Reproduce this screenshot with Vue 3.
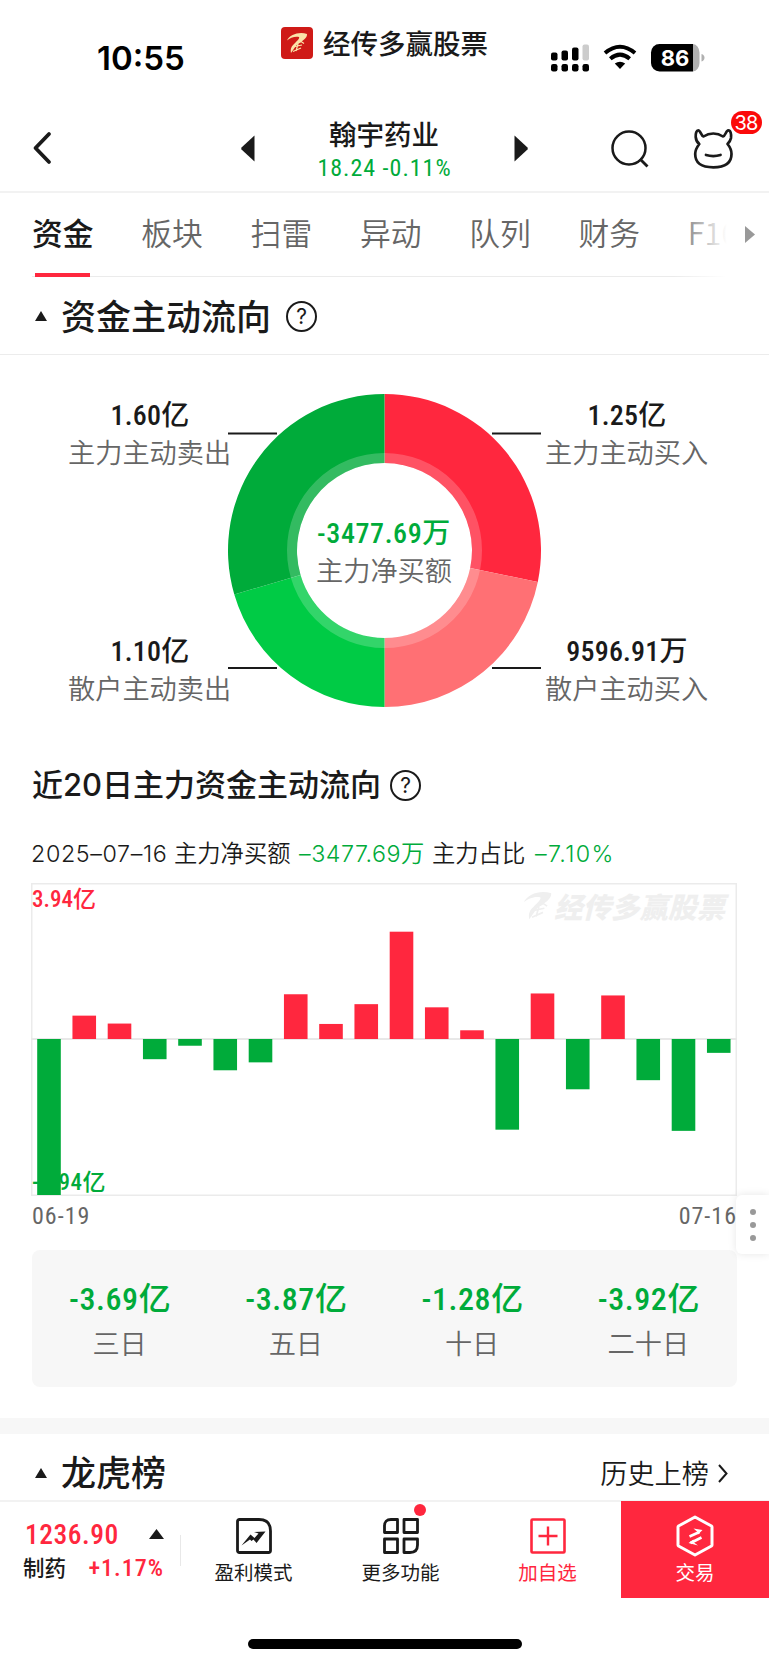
<template>
  <div class="page">
    <header class="status-bar">
      <span class="clock">10:55</span>
      <div class="brand">
        <svg class="brand-logo" viewBox="0 0 32 32">
          <rect width="32" height="32" rx="4" fill="#cf1a17" />
          <path :d="swoosh" fill="#fbe3a9" />
          <path :d="swooshInner" fill="none" stroke="#fbe3a9" stroke-width="1.2" />
        </svg>
        <span>经传多赢股票</span>
      </div>
      <svg class="status-icons" width="154" height="28" viewBox="0 0 154 28">
        <g>
          <rect x="0" y="8.5" width="6.5" height="8" rx="2" />
          <rect x="10.5" y="6.5" width="6.5" height="10" rx="2" />
          <rect x="21" y="3.5" width="6.5" height="13" rx="2" />
          <rect x="31.5" y="0.5" width="6.5" height="16" rx="2" fill="#ccc" />
          <rect v-for="x in [0, 10.5, 21, 31.5]" :key="x" :x="x" y="20" width="6.5" height="7.5" rx="2.2" />
        </g>
        <g fill="none" stroke="#000" stroke-width="4">
          <path d="M54 9 Q69 -3.5 84 9" />
          <path d="M59.3 14.7 Q69 6.5 78.7 14.7" />
        </g>
        <path d="M63.8 19.6 Q69 15.8 74.2 19.6 L69 25Z" />
        <path d="M108.5 0 H142 V27.5 H108.5 A8.5 8.5 0 0 1 100 19 V8.5 A8.5 8.5 0 0 1 108.5 0Z" />
        <path d="M142 0 A7 8.5 0 0 1 148.5 8.5 V19 A7 8.5 0 0 1 142 27.5Z" fill="#b0b0b0" />
        <path d="M150.5 10 Q153.5 11 153.5 13.7 T150.5 17.5Z" fill="#b0b0b0" />
        <text x="124" y="21.5" text-anchor="middle" class="battery-text">86</text>
      </svg>
    </header>

    <nav class="nav-bar">
      <svg class="back" width="20" height="34" viewBox="0 0 20 34">
        <path d="M17 3 L3.5 17 L17 31" fill="none" stroke="#1a1a1a" stroke-width="3.8" stroke-linecap="round" stroke-linejoin="round" />
      </svg>
      <svg class="prev" width="14" height="27" viewBox="0 0 14 27">
        <path d="M13.5 0.5 V26.5 L0.5 14.5 Q0 13.5 0.5 12.5Z" fill="#1a1a1a" />
      </svg>
      <div class="stock">
        <div class="stock-name">翰宇药业</div>
        <div class="stock-price num down">18.24 -0.11%</div>
      </div>
      <svg class="next" width="14" height="27" viewBox="0 0 14 27">
        <path d="M0.5 0.5 V26.5 L13.5 14.5 Q14 13.5 13.5 12.5Z" fill="#1a1a1a" />
      </svg>
      <svg class="search" width="38" height="38" viewBox="0 0 38 38">
        <g fill="none" stroke="#1a1a1a" stroke-width="2.5">
          <circle cx="18" cy="18" r="16.5" />
          <path d="M29 29 L36.5 36.5" stroke-width="2.8" />
        </g>
      </svg>
      <div class="mascot">
        <svg width="41" height="41" viewBox="0 0 41 41">
          <g fill="none" stroke="#1a1a1a" stroke-width="2.7" stroke-linejoin="round" stroke-linecap="round">
            <path d="M10.5 8.5 Q15 5.5 20.3 5.5 T30 8.5 C32.5 8 33 2.3 35.3 2.3 C37.5 2.3 38.5 6 38 10 C37.5 13 36 14.5 34.5 16 C37 19 38.5 22 38.5 26 C38.5 35 33 39.3 20.3 39.3 C8 39.3 2.2 35 2.2 26 C2.2 22 4 19 6.3 16 C4 14.5 3 12 2.7 9 C2.5 5 3.5 2.3 5.3 2.3 C7.5 2.3 8 8 10.5 8.5Z" />
            <path d="M13 27 Q20.3 29.2 27.5 27" stroke-width="2.8" />
          </g>
        </svg>
        <span class="badge">38</span>
      </div>
    </nav>

    <div class="tabs">
      <div v-for="(tab, i) in tabs" :key="tab" class="tab" :class="{ active: i === 0 }">{{ tab }}</div>
      <div class="tabs-fade">
        <svg width="10" height="17" viewBox="0 0 10 17"><path d="M0 0 L10 8.5 L0 17Z" fill="#999" /></svg>
      </div>
    </div>

    <section class="section-head">
      <svg class="caret" width="12" height="10" viewBox="0 0 12 10"><path d="M6 0 L12 10 H0Z" /></svg>
      <h2>资金主动流向</h2>
      <span class="help">?</span>
    </section>

    <section class="flow">
      <div class="flow-col">
        <div v-for="item in sells" :key="item.label" class="flow-item">
          <div class="flow-value num">{{ item.value }}</div>
          <div class="flow-label">{{ item.label }}</div>
        </div>
      </div>
      <div class="donut">
        <svg width="313" height="313" viewBox="0 0 313 313">
          <path v-for="s in slices" :key="s.color" :d="s.d" :fill="s.color" />
          <circle cx="156.5" cy="156.5" r="92.5" fill="none" stroke="#fff" stroke-opacity="0.2" stroke-width="10" />
          <path d="M0 39.5 H49 M264 39.5 H313 M0 273.9 H49 M264 273.9 H313" stroke="#1a1a1a" stroke-width="2" />
        </svg>
        <div class="donut-text">
          <div class="donut-value num down">-3477.69万</div>
          <div class="flow-label">主力净买额</div>
        </div>
      </div>
      <div class="flow-col right">
        <div v-for="item in buys" :key="item.label" class="flow-item">
          <div class="flow-value num">{{ item.value }}</div>
          <div class="flow-label">{{ item.label }}</div>
        </div>
      </div>
    </section>

    <section class="history">
      <div class="history-head">
        <h3>近20日主力资金主动流向</h3>
        <span class="help">?</span>
      </div>
      <div class="history-info">
        <span class="info-date">2025–07–16</span>
        <span class="info-net">主力净买额</span>
        <span class="info-amount down">–3477.69万</span>
        <span class="info-ratio">主力占比</span>
        <span class="info-pct down">–7.10%</span>
      </div>
      <div class="chart">
        <span class="axis top num">3.94亿</span>
        <span class="axis bottom num">-3.94亿</span>
        <div class="watermark">
          <svg width="33" height="33" viewBox="4 4 24 24">
            <path :d="swoosh" fill="#efefef" />
            <path :d="swooshInner" fill="none" stroke="#efefef" stroke-width="1.2" />
          </svg>
          <span>经传多赢股票</span>
        </div>
        <svg class="bars" width="706" height="313" viewBox="0 0 706 313">
          <path d="M0 156 H706" stroke="#e8e8e8" stroke-width="2" />
          <rect
            v-for="(bar, i) in bars"
            :key="i"
            :x="bar.x"
            :y="bar.y"
            width="23.6"
            :height="bar.h"
            :fill="bar.color"
          />
        </svg>
      </div>
      <div class="dates num">
        <span>06-19</span>
        <span>07-16</span>
      </div>
      <div class="summary">
        <div v-for="item in summary" :key="item.label" class="summary-item">
          <div class="summary-value num down">{{ item.value }}</div>
          <div class="summary-label">{{ item.label }}</div>
        </div>
      </div>
    </section>

    <section class="section-head rank">
      <svg class="caret" width="12" height="10" viewBox="0 0 12 10"><path d="M6 0 L12 10 H0Z" /></svg>
      <h2>龙虎榜</h2>
      <span class="more">历史上榜</span>
      <svg class="more-arrow" width="10" height="19" viewBox="0 0 10 19">
        <path d="M1 1 L8.5 9.5 L1 18" fill="none" stroke="#1a1a1a" stroke-width="2" />
      </svg>
    </section>

    <footer class="bottom-bar">
      <div class="sector">
        <div class="sector-row">
          <span class="sector-index num">1236.90</span>
          <svg width="15" height="10" viewBox="0 0 15 10"><path d="M7.5 0 L15 10 H0Z" fill="#1a1a1a" /></svg>
        </div>
        <div class="sector-row second">
          <span class="sector-name">制药</span>
          <span class="sector-pct num">+1.17%</span>
        </div>
      </div>
      <div class="action">
        <svg width="36" height="36" viewBox="0 0 36 36">
          <path d="M3.5 1.5 H23 Q34.5 1.5 34.5 13 V32.5 Q34.5 34.5 32.5 34.5 H3.5 Q1.5 34.5 1.5 32.5 V3.5 Q1.5 1.5 3.5 1.5Z" fill="none" stroke="#1a1a1a" stroke-width="2.8" />
          <path d="M5.5 27.5 L14.5 16.5 L18.5 20 L22.5 15.5 L18 14 L29.5 13.5 L20.5 25 L17.5 21.5 L15.5 23 L14 21.5Z" fill="#1a1a1a" />
        </svg>
        <span>盈利模式</span>
      </div>
      <div class="action">
        <svg width="36" height="36" viewBox="0 0 36 36">
          <g fill="none" stroke="#1a1a1a" stroke-width="2.8" stroke-linejoin="round">
            <path d="M8 1.5 H14.5 V14.5 H1.5 V8 Q1.5 1.5 8 1.5Z" />
            <path d="M21 1.5 H34.5 V14.5 H21Z" />
            <path d="M1.5 21 H14.5 V34.5 H1.5Z" />
            <path d="M21 21 H34.5 V27 Q34.5 34.5 27 34.5 H21Z" />
          </g>
        </svg>
        <span>更多功能</span>
        <i class="dot"></i>
      </div>
      <div class="action add">
        <svg width="36" height="36" viewBox="0 0 36 36">
          <rect x="1.5" y="1.5" width="33" height="33" rx="1" fill="none" stroke="#ff273e" stroke-width="2.6" />
          <path d="M8.5 18 H27.5 M18 8.5 V27.5" stroke="#ff273e" stroke-width="2.4" />
        </svg>
        <span>加自选</span>
      </div>
      <div class="action trade">
        <svg width="38" height="42" viewBox="0 0 38 42">
          <path d="M19 2 L35.5 11 Q36 11.3 36 12 V30 Q36 30.7 35.5 31 L19 40 L2.5 31 Q2 30.7 2 30 V12 Q2 11.3 2.5 11Z" fill="none" stroke="#fff" stroke-width="3" stroke-linejoin="round" />
          <path d="M13.5 21.5 L23.5 17 M14.5 28 L25.5 22.5" stroke="#fff" stroke-width="2.6" />
          <path d="M17.5 13.5 L26.5 15 L22 19.5 L21 16.5Z M12.5 28 L17.5 24.5 L18 27.5 L22 30.5Z" fill="#fff" />
        </svg>
        <span>交易</span>
      </div>
    </footer>
    <div class="home-indicator"></div>

    <div class="side-handle"><i></i><i></i><i></i></div>
  </div>
</template>

<script setup>
import { computed } from 'vue'

const RED = '#ff273e'
const GREEN = '#00ab3a'

const swoosh = 'M6 13.5 C9 7.5 18 4.5 26 7 C26.5 11 21 14.5 16.5 17 C14.5 19.5 12 23 10 26 C9.5 23 9.5 20 13 17 C16 14 19 11.5 18 10 C14 9 9 11 6 13.5Z'
const swooshInner = 'M15 17.5 L20 14.5 L23 16.5 M14 19.5 L21 18 M12 24.5 L20 21 M17 17 L15 24'

const tabs = ['资金', '板块', '扫雷', '异动', '队列', '财务', 'F10']

const sells = [
  { value: '1.60亿', label: '主力主动卖出' },
  { value: '1.10亿', label: '散户主动卖出' }
]
const buys = [
  { value: '1.25亿', label: '主力主动买入' },
  { value: '9596.91万', label: '散户主动买入' }
]

const summary = [
  { value: '-3.69亿', label: '三日' },
  { value: '-3.87亿', label: '五日' },
  { value: '-1.28亿', label: '十日' },
  { value: '-3.92亿', label: '二十日' }
]

// Angles in degrees, clockwise from 12 o'clock
function arc(from, to) {
  const c = 156.5
  const point = (r, deg) => {
    const a = ((deg - 90) * Math.PI) / 180
    return `${(c + r * Math.cos(a)).toFixed(2)} ${(c + r * Math.sin(a)).toFixed(2)}`
  }
  return `M${point(156.5, from)} A156.5 156.5 0 0 1 ${point(156.5, to)} L${point(87.5, to)} A87.5 87.5 0 0 0 ${point(87.5, from)}Z`
}

const slices = [
  { color: RED, d: arc(0, 101.6) },
  { color: '#ff7074', d: arc(101.6, 180) },
  { color: '#00cb45', d: arc(180, 253.7) },
  { color: GREEN, d: arc(253.7, 360) }
]

// Daily net buy, in 亿
const max = 3.94
const daily = [
  -3.94, 0.59, 0.39, -0.51, -0.17, -0.79, -0.59, 1.13, 0.38, 0.88,
  2.71, 0.8, 0.22, -2.29, 1.15, -1.27, 1.1, -1.04, -2.32, -0.35
]

const bars = computed(() => daily.map((v, i) => {
  const h = (Math.abs(v) / max) * 156
  return {
    x: 6.2 + i * 35.25,
    y: v > 0 ? 156 - h : 156,
    h,
    color: v > 0 ? RED : GREEN
  }
}))
</script>

<style>
body {
  margin: 0;
  background: #fff;
}
</style>

<style scoped>
.page {
  position: relative;
  width: 769px;
  height: 1665px;
  overflow: hidden;
  box-sizing: border-box;
  background: #fff;
  color: #1a1a1a;
  font-family: "Noto Sans CJK SC", sans-serif;
  white-space: nowrap;
}

.page svg {
  display: block;
  flex-shrink: 0;
}

.num {
  font-family: Roboto, "Noto Sans CJK SC", sans-serif;
  font-stretch: 85%;
}

.down {
  color: #00ab3a;
}

.status-bar {
  display: flex;
  height: 96px;
  color: #000;
}

.clock {
  width: 184px;
  padding-left: 97px;
  padding-top: 38px;
  font: 600 33px/40px Inter, sans-serif;
}

.brand {
  display: flex;
  align-items: center;
  width: 270px;
  height: 32px;
  margin-top: 27px;
  font-size: 27.5px;
  font-weight: 500;
  line-height: 32px;
  color: #1a1a1a;
}

.brand-logo {
  width: 32px;
  height: 32px;
  margin-right: 10px;
}

.brand span {
  margin-top: -3px;
}

.status-icons {
  margin-top: 43.5px;
}

.battery-text {
  font: 700 22px Inter, sans-serif;
  fill: #fff;
}

.nav-bar {
  display: flex;
  height: 97px;
  box-sizing: border-box;
  border-bottom: 2px solid #f2f2f2;
}

.back {
  margin: 35px 0 0 32px;
}

.prev {
  margin: 38.5px 0 0 188.5px;
}

.stock {
  width: 259px;
  padding-top: 18px;
  text-align: center;
}

.stock-name {
  font-size: 27.5px;
  font-weight: 500;
  line-height: 38px;
}

.stock-price {
  padding-left: 1px;
  font-size: 24px;
  line-height: 32px;
  letter-spacing: 1px;
}

.next {
  margin-top: 38.5px;
}

.search {
  margin: 34px 0 0 83px;
}

.mascot {
  position: relative;
  margin: 32px 0 0 44px;
}

.badge {
  position: absolute;
  top: -17px;
  left: 38px;
  width: 31px;
  height: 23px;
  border-radius: 12px;
  background: #fb0a0a;
  color: #fff;
  font: 400 20px/24px Inter, sans-serif;
  letter-spacing: -0.8px;
  text-align: center;
}

.tabs {
  position: relative;
  display: flex;
  height: 84px;
  box-sizing: border-box;
  padding-left: 32px;
  overflow: hidden;
}

.tabs::after {
  content: '';
  position: absolute;
  left: 32px;
  right: 0;
  bottom: 0;
  height: 1px;
  background: #ebebeb;
}

.tab {
  position: relative;
  flex: 0 0 109.3px;
  font-size: 30.8px;
  font-weight: 350;
  line-height: 78px;
  color: #666;
}

.tab.active {
  color: #1a1a1a;
  font-weight: 500;
}

.tab.active::after {
  content: '';
  position: absolute;
  z-index: 1;
  left: 3px;
  bottom: 0;
  width: 55px;
  height: 4px;
  background: #ff273e;
}

.tabs-fade {
  position: absolute;
  z-index: 2;
  top: 0;
  right: 0;
  width: 96px;
  height: 84px;
  box-sizing: border-box;
  padding: 33px 0 0 72px;
  background: linear-gradient(90deg, rgba(255, 255, 255, 0), #fff 56%);
}

.section-head {
  display: flex;
  align-items: center;
  height: 78px;
  box-sizing: border-box;
  padding-left: 35px;
  border-bottom: 1px solid #ececec;
}

.caret {
  margin-right: 14px;
  fill: #1a1a1a;
}

h2,
h3 {
  margin: 0;
  font-weight: 500;
}

h2 {
  margin-top: -2px;
  font-size: 35px;
  line-height: 50px;
}

.help {
  width: 27px;
  height: 27px;
  border: 2px solid #1a1a1a;
  border-radius: 50%;
  font: 400 21px/27px Inter, sans-serif;
  text-align: center;
}

.section-head .help {
  margin: 1px 0 0 15px;
}

.flow {
  display: flex;
  height: 390px;
  box-sizing: border-box;
  padding-top: 39px;
}

.flow-col {
  display: flex;
  flex-direction: column;
  gap: 160px;
  width: 162px;
  margin: 1px -2px 0 68px;
}

.flow-col.right {
  margin: 1px 0 0 4px;
}

.flow-item {
  height: 76px;
  text-align: center;
}

.flow-value {
  padding: 3px 0 0 2px;
  font-size: 28px;
  font-weight: 500;
  line-height: 36px;
  letter-spacing: 0.2px;
}

.flow-label {
  margin-top: -1px;
  font-size: 27.2px;
  font-weight: 350;
  line-height: 36px;
  color: #666;
}

.donut {
  position: relative;
  width: 313px;
}

.donut-text {
  position: absolute;
  top: 122px;
  left: 0;
  width: 312px;
  text-align: center;
}

.donut-value {
  font-size: 28px;
  font-weight: 500;
  line-height: 36px;
  letter-spacing: 0.6px;
}

.history {
  padding: 15px 32px 0 31px;
}

.history-head {
  display: flex;
  align-items: center;
  height: 50px;
}

h3 {
  margin: 0 9px 0 1px;
  font-family: Inter, "Noto Sans CJK SC", sans-serif;
  font-size: 31px;
  line-height: 46px;
}

.history-info {
  display: flex;
  height: 73px;
  box-sizing: border-box;
  padding-top: 26px;
  font-family: Inter, "Noto Sans CJK SC", sans-serif;
  font-size: 23.3px;
  font-weight: 350;
  line-height: 36px;
}

.info-date {
  width: 143px;
  letter-spacing: 0.6px;
}

.info-net {
  width: 125px;
}

.info-amount {
  width: 133px;
  letter-spacing: 0.5px;
}

.info-ratio {
  width: 103px;
}

.info-pct {
  letter-spacing: 1.3px;
}

.chart {
  position: relative;
  width: 706px;
  height: 313px;
  box-sizing: border-box;
  box-shadow: inset 0 0 0 1.5px #ebebeb;
}

.bars {
  position: relative;
}

.axis {
  position: absolute;
  left: 1px;
  font-size: 23px;
  font-weight: 500;
  line-height: 32px;
}

.axis.top {
  top: 1px;
  color: #ff273e;
}

.axis.bottom {
  bottom: -3px;
  color: #00ab3a;
  letter-spacing: 0.5px;
}

.watermark {
  position: absolute;
  top: 6px;
  right: 12px;
  display: flex;
  align-items: center;
  height: 32px;
  color: #efefef;
  font-size: 28.5px;
  font-weight: 900;
  font-style: italic;
}

.dates {
  display: flex;
  justify-content: space-between;
  height: 54px;
  padding-left: 1px;
  box-sizing: border-box;
  font-size: 24px;
  font-weight: 400;
  line-height: 41px;
  letter-spacing: 1px;
  color: #666;
}

.summary {
  display: flex;
  height: 137px;
  margin-left: 1px;
  box-sizing: border-box;
  padding-top: 26px;
  border-radius: 8px;
  background: #f7f7f7;
}

.summary-item {
  flex: 1;
  text-align: center;
}

.summary-value {
  font-size: 32px;
  font-weight: 500;
  line-height: 46px;
  letter-spacing: 0.6px;
}

.summary-label {
  margin-right: 1px;
  font-size: 27.2px;
  font-weight: 350;
  line-height: 40px;
  color: #666;
}

.rank {
  height: 83px;
  margin-top: 31px;
  padding-top: 5px;
  border-top: 16px solid #f7f7f7;
  border-bottom: 0;
}

.rank h2 {
  margin-top: 1px;
}

.rank .caret {
  margin-top: 6px;
}

.more {
  margin: 3px 0 0 auto;
  font-size: 27.2px;
  font-weight: 350;
}

.more-arrow {
  margin: 7px 41px 0 9px;
}

.bottom-bar {
  display: flex;
  position: relative;
  height: 97px;
  box-sizing: border-box;
  box-shadow: 0 -1px 0 #f2f2f2, inset 0 1px 0 #f2f2f2;
}

.sector {
  position: relative;
  width: 180px;
  box-sizing: border-box;
  padding: 15px 16px 0 23px;
}

.sector::after {
  content: '';
  position: absolute;
  top: 34px;
  right: -1px;
  width: 1px;
  height: 31px;
  background: #e8e8e8;
}

.sector-row {
  display: flex;
  align-items: center;
  justify-content: space-between;
  height: 36px;
}

.sector-row.second {
  height: 32px;
}

.sector-index {
  padding-left: 2px;
  color: #ff273e;
  font-size: 27.5px;
  font-weight: 500;
  letter-spacing: 0.5px;
}

.sector-name {
  margin-top: -4px;
  font-size: 21.5px;
  font-weight: 500;
}

.sector-pct {
  color: #ff273e;
  font-size: 24px;
  font-weight: 500;
  letter-spacing: 1px;
}

.action {
  position: relative;
  display: flex;
  flex-direction: column;
  align-items: center;
  width: 147px;
  padding-top: 17px;
  font-size: 19.5px;
  font-weight: 400;
}

.action span {
  margin-top: 4px;
  line-height: 28px;
}

.dot {
  position: absolute;
  top: 3px;
  left: 87px;
  width: 12px;
  height: 12px;
  border-radius: 50%;
  background: #ff273e;
}

.add {
  color: #ff273e;
}

.trade {
  width: 148px;
  height: 97px;
  box-sizing: border-box;
  padding-top: 14px;
  background: #ff273e;
  color: #fff;
}

.trade span {
  margin-top: 1px;
}

.home-indicator {
  width: 274px;
  height: 10px;
  margin: 41px 0 0 247.5px;
  border-radius: 5px;
  background: #000;
}

.side-handle {
  position: absolute;
  top: 1195px;
  right: 0;
  display: flex;
  flex-direction: column;
  align-items: center;
  justify-content: center;
  gap: 7px;
  width: 33px;
  height: 59px;
  border-radius: 6px 0 0 6px;
  background: #fff;
  box-shadow: 0 0 8px rgba(0, 0, 0, 0.1);
}

.side-handle i {
  width: 6px;
  height: 6px;
  border-radius: 50%;
  background: #999;
}
</style>
